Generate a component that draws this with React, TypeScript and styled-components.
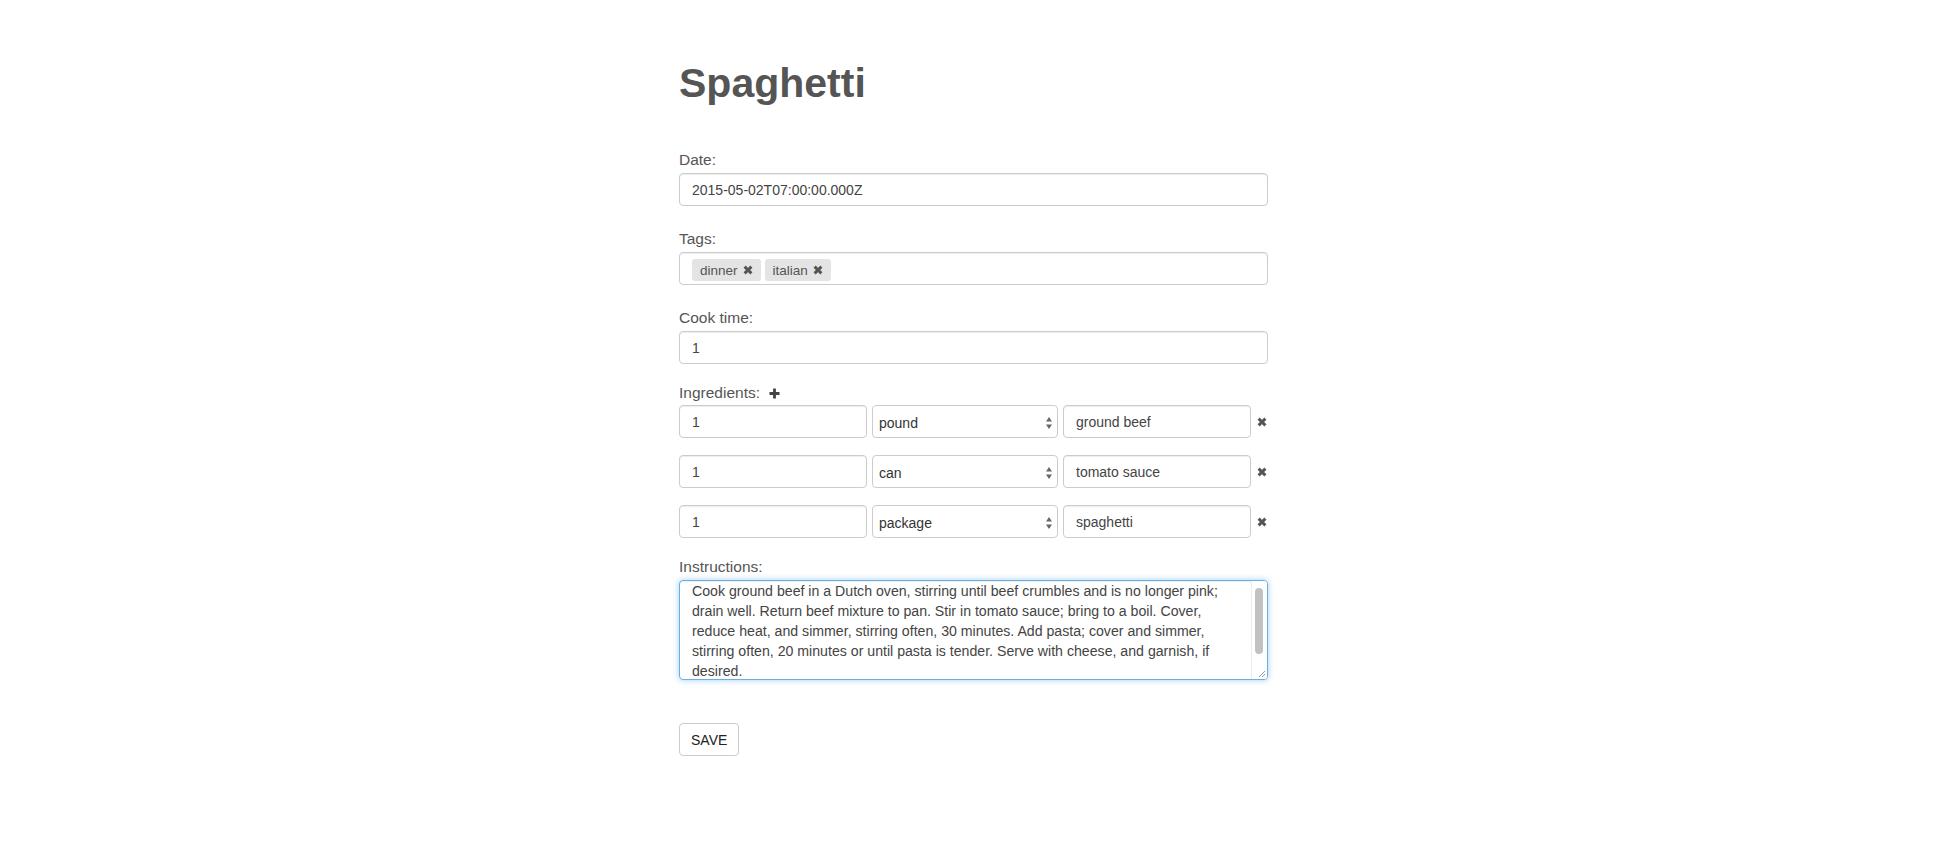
import React from 'react';
import styled, { createGlobalStyle } from 'styled-components';

const GlobalStyle = createGlobalStyle`
  body {
    margin: 0;
    background: #fff;
    font-family: "Liberation Sans", Arial, Helvetica, sans-serif;
    color: #444;
  }
`;

const Container = styled.div`
  width: 589px;
  margin: 0 auto;
  padding-top: 61px;
`;

const Title = styled.h1`
  margin: 0 0 45px;
  font-size: 41px;
  line-height: 44px;
  font-weight: 700;
  color: #555;
`;

const Field = styled.div<{ $mb?: number }>`
  margin-bottom: ${(p) => p.$mb ?? 23}px;
`;

const Label = styled.label<{ $mb?: number }>`
  display: flex;
  align-items: center;
  height: 20px;
  margin-bottom: ${(p) => p.$mb ?? 3}px;
  font-size: 15.5px;
  line-height: 20px;
  color: #555;
`;

const Input = styled.input`
  display: block;
  box-sizing: border-box;
  width: 100%;
  height: 33px;
  padding: 0 12px;
  border: 1px solid #ccc;
  border-radius: 4px;
  box-shadow: inset 0 1px 1px rgba(0, 0, 0, 0.075);
  font-family: inherit;
  font-size: 14px;
  color: #444;
  background: #fff;
  outline: none;
`;

const TagBox = styled.div`
  box-sizing: border-box;
  display: flex;
  align-items: flex-start;
  gap: 4px;
  height: 33px;
  padding: 6px 12px 0;
  border: 1px solid #ccc;
  border-radius: 4px;
  box-shadow: inset 0 1px 1px rgba(0, 0, 0, 0.075);
`;

const Tag = styled.span`
  display: inline-flex;
  align-items: center;
  gap: 5px;
  height: 22px;
  padding: 0 8px;
  border-radius: 3px;
  background: #e4e4e4;
  font-size: 13.5px;
  color: #555;
`;

const PlusBtn = styled.span`
  display: inline-flex;
  margin-left: 9px;
  color: #444;
`;

const IngredientList = styled.div`
  display: flex;
  flex-direction: column;
  gap: 17px;
`;

const Row = styled.div`
  display: grid;
  grid-template-columns: 188px 186px 188px 1fr;
  column-gap: 5px;
  align-items: center;
`;

const SelectWrap = styled.div`
  position: relative;
`;

const Select = styled.select`
  display: block;
  box-sizing: border-box;
  width: 100%;
  height: 33px;
  padding: 3px 18px 0 6px;
  border: 1px solid #ccc;
  border-radius: 4px;
  background: #fff;
  appearance: none;
  -webkit-appearance: none;
  font-family: inherit;
  font-size: 14px;
  color: #333;
  outline: none;
`;

const Arrows = styled.span`
  position: absolute;
  right: 6px;
  top: 12px;
  display: flex;
  pointer-events: none;
  color: #666;
`;

const RemoveBtn = styled.span`
  display: flex;
  justify-content: center;
  color: #555;
`;

const AreaWrap = styled.div`
  position: relative;
`;

const TextArea = styled.textarea<{ $focused?: boolean }>`
  display: block;
  box-sizing: border-box;
  width: 100%;
  height: 100px;
  padding: 0 38px 0 12px;
  border: 1px solid ${(p) => (p.$focused ? '#66afe9' : '#ccc')};
  border-radius: 4px;
  box-shadow: ${(p) =>
    p.$focused
      ? 'inset 0 1px 1px rgba(0,0,0,.075), 0 0 6px rgba(102,175,233,.6)'
      : 'inset 0 1px 1px rgba(0,0,0,.075)'};
  font-family: inherit;
  font-size: 14.15px;
  line-height: 20px;
  color: #444;
  resize: none;
  overflow: hidden;
  outline: none;
`;

const Track = styled.div`
  position: absolute;
  top: 1px;
  right: 1px;
  bottom: 1px;
  width: 15px;
  border-left: 1px solid #ececec;
  background: #fff;
  border-radius: 0 3px 3px 0;
  pointer-events: none;
`;

const Thumb = styled.div`
  position: absolute;
  left: 3px;
  top: 7px;
  width: 8px;
  height: 66px;
  border-radius: 4px;
  background: #c1c1c1;
`;

const Grip = styled.svg`
  position: absolute;
  right: 1px;
  bottom: 1px;
`;

const SaveButton = styled.button`
  display: block;
  box-sizing: border-box;
  height: 33px;
  margin-top: 43px;
  padding: 0 11px;
  border: 1px solid #ccc;
  border-radius: 4px;
  background: #fff;
  font-family: inherit;
  font-size: 14px;
  color: #222;
  cursor: pointer;
`;

const Cross: React.FC<{ size?: number }> = ({ size = 10 }) => (
  <svg width={size} height={size} viewBox="0 0 10 10">
    <path d="M1.6 1.6L8.4 8.4M8.4 1.6L1.6 8.4" stroke="currentColor" strokeWidth="2.9" />
  </svg>
);

const Plus = () => (
  <svg width="11" height="11" viewBox="0 0 11 11">
    <path d="M5.5 0.5V10.5M0.5 5.5H10.5" stroke="currentColor" strokeWidth="2.8" />
  </svg>
);

const UpDown = () => (
  <svg width="6" height="12" viewBox="0 0 6 12">
    <path d="M3 0L6 4.5H0Z M3 12L0 7.5H6Z" fill="currentColor" />
  </svg>
);

const units = ['pound', 'can', 'package'];

const ingredients = [
  { qty: '1', unit: 'pound', name: 'ground beef' },
  { qty: '1', unit: 'can', name: 'tomato sauce' },
  { qty: '1', unit: 'package', name: 'spaghetti' },
];

const instructions =
  'Cook ground beef in a Dutch oven, stirring until beef crumbles and is no longer pink; drain well. Return beef mixture to pan. Stir in tomato sauce; bring to a boil. Cover, reduce heat, and simmer, stirring often, 30 minutes. Add pasta; cover and simmer, stirring often, 20 minutes or until pasta is tender. Serve with cheese, and garnish, if desired.';

const App: React.FC = () => {
  return (
    <>
      <GlobalStyle />
      <Container>
        <Title>Spaghetti</Title>

        <Field>
          <Label>Date:</Label>
          <Input defaultValue="2015-05-02T07:00:00.000Z" />
        </Field>

        <Field>
          <Label>Tags:</Label>
          <TagBox>
            {['dinner', 'italian'].map((t) => (
              <Tag key={t}>
                {t}
                <Cross size={10} />
              </Tag>
            ))}
          </TagBox>
        </Field>

        <Field $mb={19}>
          <Label>Cook time:</Label>
          <Input defaultValue="1" />
        </Field>

        <Field $mb={19}>
          <Label $mb={2}>
            Ingredients:
            <PlusBtn>
              <Plus />
            </PlusBtn>
          </Label>
          <IngredientList>
            {ingredients.map((ing) => (
              <Row key={ing.name}>
                <Input defaultValue={ing.qty} />
                <SelectWrap>
                  <Select defaultValue={ing.unit}>
                    {units.map((u) => (
                      <option key={u}>{u}</option>
                    ))}
                  </Select>
                  <Arrows>
                    <UpDown />
                  </Arrows>
                </SelectWrap>
                <Input defaultValue={ing.name} />
                <RemoveBtn>
                  <Cross />
                </RemoveBtn>
              </Row>
            ))}
          </IngredientList>
        </Field>

        <Field $mb={0}>
          <Label>Instructions:</Label>
          <AreaWrap>
            <TextArea $focused defaultValue={instructions} />
            <Track>
              <Thumb />
              <Grip width="9" height="9" viewBox="0 0 9 9">
                <path d="M8 2L2 8M8 5L5 8" stroke="#999" strokeWidth="1" />
              </Grip>
            </Track>
          </AreaWrap>
        </Field>

        <SaveButton>SAVE</SaveButton>
      </Container>
    </>
  );
};

export default App;
